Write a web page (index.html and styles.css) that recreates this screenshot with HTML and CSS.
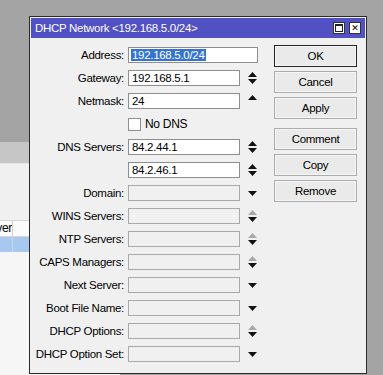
FILE: index.html
```html
<!DOCTYPE html>
<html lang="en">

<head>
  <meta charset="UTF-8">
  <meta name="viewport" content="width=device-width, initial-scale=1.0">
  <title>DHCP Network</title>
  <link rel="stylesheet" href="styles.css">
</head>

<body>
  <div class="desk">
    <div class="panel">
      <div class="panel-bar"></div>
      <div class="panel-area"></div>
      <div class="grid-head">
        <div class="cell"><span>DNS Server</span></div>
        <div class="cell-rest"></div>
      </div>
      <div class="grid-row is-selected">
        <div class="cell"></div>
        <div class="cell-rest"></div>
      </div>
      <div class="panel-rest"></div>
    </div>

    <div class="window">
      <div class="title-bar">
        <span class="title-text">DHCP Network &lt;192.168.5.0/24&gt;</span>
        <div class="title-btns">
          <span class="tbtn tbtn-max"><i></i></span>
          <span class="tbtn tbtn-close">&#x2715;</span>
        </div>
      </div>

      <div class="win-body">
        <form class="fields">
          <label class="lbl">Address:</label>
          <div class="box box-wide"><span class="sel">192.168.5.0/24</span></div>

          <label class="lbl">Gateway:</label>
          <div class="box">192.168.5.1</div>
          <div class="arw"><svg width="9" height="12"><polygon points="0,5 4.5,0 9,5" /><polygon points="0,7 9,7 4.5,12" /></svg></div>

          <label class="lbl">Netmask:</label>
          <div class="box">24</div>
          <div class="arw"><svg width="9" height="12"><polygon points="0,5 4.5,0 9,5" /></svg></div>

          <span class="lbl"></span>
          <div class="check-row"><span class="check"></span>No DNS</div>
          <span></span>

          <label class="lbl">DNS Servers:</label>
          <div class="box">84.2.44.1</div>
          <div class="arw"><svg width="9" height="12"><polygon points="0,5 4.5,0 9,5" /><polygon points="0,7 9,7 4.5,12" /></svg></div>

          <span class="lbl"></span>
          <div class="box">84.2.46.1</div>
          <div class="arw"><svg width="9" height="12"><polygon points="0,5 4.5,0 9,5" /><polygon points="0,7 9,7 4.5,12" /></svg></div>

          <label class="lbl">Domain:</label>
          <div class="box is-off"></div>
          <div class="arw"><svg width="9" height="12"><polygon points="0,4 9,4 4.5,9" /></svg></div>

          <label class="lbl">WINS Servers:</label>
          <div class="box is-off"></div>
          <div class="arw"><svg width="9" height="12"><polygon class="dim" points="0,5 4.5,0 9,5" /><polygon points="0,7 9,7 4.5,12" /></svg></div>

          <label class="lbl">NTP Servers:</label>
          <div class="box is-off"></div>
          <div class="arw"><svg width="9" height="12"><polygon class="dim" points="0,5 4.5,0 9,5" /><polygon points="0,7 9,7 4.5,12" /></svg></div>

          <label class="lbl">CAPS Managers:</label>
          <div class="box is-off"></div>
          <div class="arw"><svg width="9" height="12"><polygon class="dim" points="0,5 4.5,0 9,5" /><polygon points="0,7 9,7 4.5,12" /></svg></div>

          <label class="lbl">Next Server:</label>
          <div class="box is-off"></div>
          <div class="arw"><svg width="9" height="12"><polygon points="0,4 9,4 4.5,9" /></svg></div>

          <label class="lbl">Boot File Name:</label>
          <div class="box is-off"></div>
          <div class="arw"><svg width="9" height="12"><polygon points="0,4 9,4 4.5,9" /></svg></div>

          <label class="lbl">DHCP Options:</label>
          <div class="box is-off"></div>
          <div class="arw"><svg width="9" height="12"><polygon class="dim" points="0,5 4.5,0 9,5" /><polygon points="0,7 9,7 4.5,12" /></svg></div>

          <label class="lbl">DHCP Option Set:</label>
          <div class="box is-off"></div>
          <div class="arw"><svg width="9" height="12"><polygon points="0,4 9,4 4.5,9" /></svg></div>
        </form>

        <div class="buttons">
          <button class="btn btn-default" type="button">OK</button>
          <button class="btn" type="button">Cancel</button>
          <button class="btn" type="button">Apply</button>
          <button class="btn btn-split" type="button">Comment</button>
          <button class="btn" type="button">Copy</button>
          <button class="btn" type="button">Remove</button>
        </div>
      </div>
    </div>
  </div>
</body>

</html>
```

FILE: styles.css
```css
html {
  box-sizing: border-box;
  font-family: "Liberation Sans", Arial, sans-serif;
  font-size: 11.5px;
  letter-spacing: -0.3px;
}

*,
*:before,
*:after {
  box-sizing: inherit;
}

body {
  margin: 0;
}

/* fondo: la ventana de atras */
.desk {
  position: relative;
  width: 383px;
  height: 375px;
  overflow: hidden;
  background-color: #a4a4a4;
}

.panel {
  padding-top: 142px;
  width: 120px;
  height: 375px;
  display: flex;
  flex-direction: column;
}

.panel-bar {
  height: 21px;
  background-color: #c6c6c6;
}

.panel-area {
  height: 57px;
  background-color: #f0f0f0;
  border-top: 1px solid #e4e4e4;
}

.grid-head,
.grid-row {
  display: flex;
  height: 16px;
}

.grid-head {
  background-color: #fbfbfb;
  border-top: 1px solid #d6d6d6;
  border-bottom: 1px solid #d6d6d6;
  height: 17px;
}

.cell {
  width: 13px;
  border-right: 1px solid #d0d0d0;
  overflow: hidden;
  display: flex;
  justify-content: flex-end;
  white-space: nowrap;
  line-height: 15px;
  font-size: 12px;
}

.cell-rest {
  flex: 1;
}

.grid-row.is-selected {
  background-color: #a9c8ef;
  height: 15px;
}

.grid-row.is-selected .cell {
  border-right-color: #c4dbf6;
}

.panel-rest {
  flex: 1;
  background-color: #f6f6f6;
}

/* ventana */
.window {
  position: absolute;
  left: 29px;
  top: 16px;
  width: 338px;
  height: 358px;
  border: 1px solid #2b2b2b;
  padding: 1px;
  background-color: #f0f0f0;
}

.title-bar {
  height: 20px;
  background-color: #5151c4;
  color: #fff;
  display: flex;
  align-items: center;
  justify-content: space-between;
  padding: 0 4px 0 4px;
}

.title-text {
  font-size: 11.5px;
  letter-spacing: -0.3px;
}

.title-btns {
  display: flex;
  gap: 4px;
}

.tbtn {
  width: 12px;
  height: 12px;
  background-color: #fff;
  border: 1px solid #333;
  display: flex;
  align-items: center;
  justify-content: center;
  color: #000;
}

.tbtn-max i {
  width: 8px;
  height: 8px;
  border: 1px solid #222;
  border-top-width: 2px;
}

.tbtn-close {
  font-family: "DejaVu Sans", sans-serif;
  font-size: 9px;
  font-weight: bold;
  line-height: 1;
  letter-spacing: 0;
}

.win-body {
  display: flex;
  align-items: flex-start;
}

.fields {
  margin: 0;
  padding-top: 9px;
  display: grid;
  grid-template-columns: 93px 112px 13px;
  grid-auto-rows: 16px;
  column-gap: 4px;
  row-gap: 7px;
}

.lbl {
  text-align: right;
  line-height: 16px;
  white-space: nowrap;
  color: #000;
}

.box {
  background-color: #fff;
  border: 1px solid #8e8e8e;
  line-height: 14px;
  padding-left: 3px;
  white-space: nowrap;
}

.box-wide {
  grid-column: span 2;
  margin-right: -1px;
  padding-left: 2px;
}

.box.is-off {
  background-color: #f0f0f0;
  border-color: #a9a9a9;
}

.sel {
  background-color: #3474cc;
  color: #fff;
  padding: 0 1px;
}

.arw {
  display: flex;
  align-items: center;
  justify-content: flex-end;
}

.arw svg {
  display: block;
}

.arw polygon {
  fill: #111;
}

.arw polygon.dim {
  fill: #a8a8a8;
}

.check-row {
  display: flex;
  align-items: center;
  gap: 4px;
  white-space: nowrap;
  font-size: 12px;
}

.check {
  width: 13px;
  height: 13px;
  background-color: #fff;
  border: 1px solid #8e8e8e;
}

.buttons {
  margin-left: 17px;
  padding-top: 7px;
  display: flex;
  flex-direction: column;
  gap: 4px;
}

.btn {
  width: 83px;
  height: 22px;
  margin: 0;
  padding: 0;
  font-family: inherit;
  font-size: 11.5px;
  letter-spacing: -0.3px;
  color: #000;
  background-color: #eaeaea;
  border: 1px solid #acacac;
  box-shadow: inset 0 0 0 1px #f6f6f6;
}

.btn-default {
  border-color: #262626;
}

.btn-split {
  margin-top: 5px;
}
```
